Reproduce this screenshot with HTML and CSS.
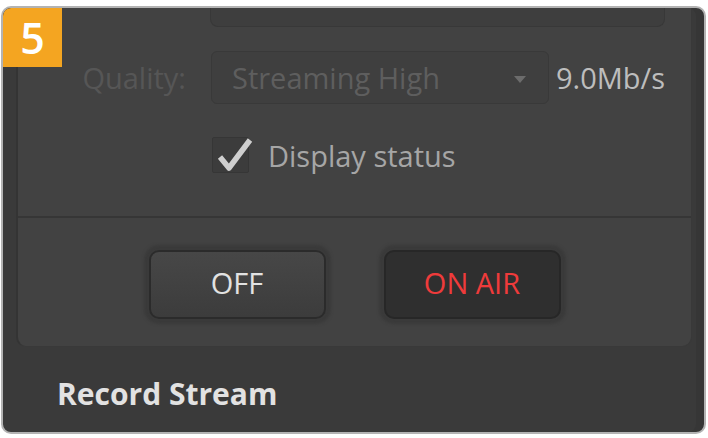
FILE: index.html
```html
<!DOCTYPE html>
<html lang="en">
<head>
    <meta charset="UTF-8">
    <meta name="viewport" content="width=device-width, initial-scale=1.0">
    <title>Output - Live Stream</title>
    <link rel="stylesheet" href="styles.css">
</head>
<body>

<div class="frame">
    <div class="step-badge">5</div>

    <div class="stream-panel">
        <div class="top-field"></div>

        <div class="quality-row">
            <div class="field-label">Quality:</div>
            <div class="select-box">
                <span>Streaming High</span>
                <span class="select-arrow"></span>
            </div>
            <div class="bitrate">9.0Mb/s</div>
        </div>

        <div class="checkbox-row">
            <div class="checkbox">
                <svg viewBox="0 0 36 36" width="36" height="36">
                    <polyline points="7,19 16,30 37,2" fill="none" stroke="#cfcfcf" stroke-width="5.5" stroke-linejoin="round"/>
                </svg>
            </div>
            <span class="checkbox-label">Display status</span>
        </div>

        <div class="divider"></div>

        <div class="button-row">
            <div class="air-button off">OFF</div>
            <div class="air-button on">ON AIR</div>
        </div>
    </div>

    <div class="section-title">Record Stream</div>
</div>

</body>
</html>
```

FILE: styles.css
```css
body {
    margin: 0;
    padding: 0;
    background-color: #ffffff;
    font-family: "Open Sans", "DejaVu Sans", sans-serif;
}
.frame {
    position: relative;
    box-sizing: border-box;
    height: 428px;
    margin: 6px 2px 4px 1px;
    padding: 0 12px 0 13px;
    border: 2px solid #b3b3b3;
    border-radius: 10px;
    background-color: #3a3a3a;
    box-shadow: inset -8px 0 0 #363636;
    overflow: hidden;
}
.step-badge {
    position: absolute;
    top: 0;
    left: 0;
    width: 59px;
    height: 59px;
    background-color: #f4a521;
    border-top-left-radius: 8px;
    color: #fff;
    font-size: 43px;
    font-weight: 600;
    line-height: 59px;
    text-align: center;
    z-index: 2;
}
.stream-panel {
    box-sizing: border-box;
    height: 339px;
    background-color: #424242;
    border-left: 2px solid #343434;
    border-right: 1px solid #393939;
    border-bottom: 1px solid #393939;
    border-radius: 0 0 10px 10px;
}
.top-field {
    box-sizing: border-box;
    width: 455px;
    height: 19px;
    margin-left: 192px;
    background-color: #3e3e3e;
    border: 1px solid #383838;
    border-top: none;
    border-radius: 0 0 8px 8px;
}
.quality-row {
    display: flex;
    align-items: center;
    height: 53px;
    margin-top: 24px;
    font-size: 29px;
}
.field-label {
    width: 168px;
    text-align: right;
    color: #565656;
}
.select-box {
    box-sizing: border-box;
    display: flex;
    align-items: center;
    justify-content: space-between;
    width: 338px;
    height: 53px;
    margin-left: 25px;
    padding: 0 22px 0 20px;
    background-color: #3f3f3f;
    border: 1px solid #393939;
    border-radius: 6px;
    color: #5e5e5e;
}
.select-arrow {
    width: 0;
    height: 0;
    border-left: 6px solid transparent;
    border-right: 6px solid transparent;
    border-top: 7px solid #6c6c6c;
    margin-top: 3px;
}
.bitrate {
    margin-left: 7px;
    color: #bdbdbd;
}
.checkbox-row {
    display: flex;
    align-items: center;
    height: 36px;
    margin-top: 33px;
    margin-left: 194px;
}
.checkbox {
    box-sizing: border-box;
    width: 37px;
    height: 36px;
    background-color: #3c3c3c;
    border: 1px solid #363636;
    border-radius: 2px;
}
.checkbox svg {
    display: block;
    overflow: visible;
}
.checkbox-label {
    margin-left: 19px;
    font-size: 29px;
    color: #a6a6a6;
}
.divider {
    height: 2px;
    margin-top: 43px;
    background-color: #363636;
}
.button-row {
    display: flex;
    justify-content: center;
    gap: 58px;
    margin-top: 32px;
}
.air-button {
    box-sizing: border-box;
    display: flex;
    align-items: center;
    justify-content: center;
    width: 177px;
    height: 69px;
    padding-bottom: 4px;
    border-radius: 10px;
    font-size: 29px;
    box-shadow: 0 0 3px 5px #3a3a3a;
}
.air-button.off {
    background: linear-gradient(#474747, #3c3c3c);
    border: 2px solid #2b2b2b;
    color: #e2e2e2;
}
.air-button.on {
    background-color: #2f2f2f;
    border: 2px solid #272727;
    color: #ef3b3b;
}
.section-title {
    margin-top: 27px;
    margin-left: 41px;
    font-size: 30px;
    font-weight: bold;
    line-height: 40px;
    color: #e2e2e2;
}
```
